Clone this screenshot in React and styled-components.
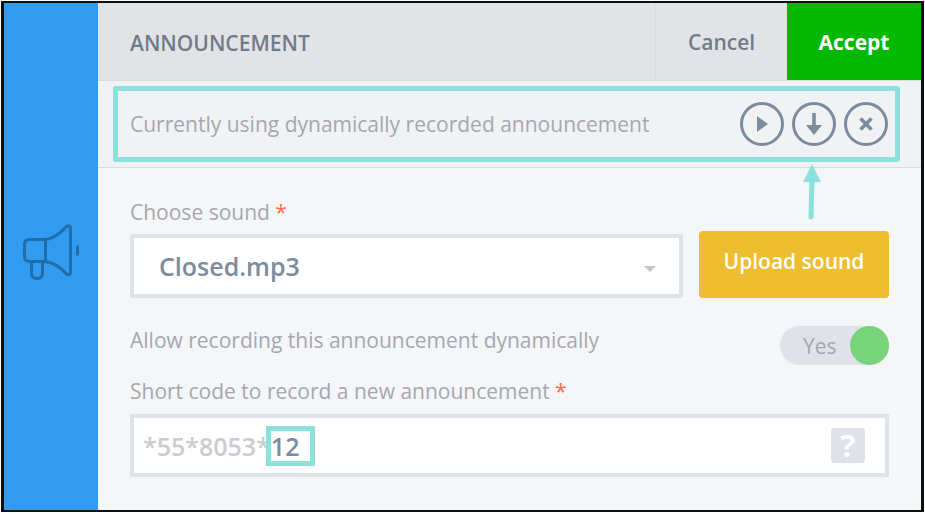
import React, { useState } from "react";
import styled, { createGlobalStyle } from "styled-components";

const aqua = "#8be1dc";
const slate = "#7b8c9e";
const line = "#dfe2e8";

const GlobalStyle = createGlobalStyle`
  *, *::before, *::after { box-sizing: border-box; }
  html, body, #root { height: 100%; }
  body { margin: 0; background: #fff; }
  body, button, input, select { font-family: "Open Sans", "Noto Sans", sans-serif; }
`;

const Page = styled.div`
  min-height: 100%;
  display: flex;
  padding: 1px 1px 2px;
`;

const Frame = styled.div`
  flex: 1;
  display: flex;
  border: 3px solid #0c0d0d;
  border-width: 2px 3px;
  background: #f5f6f8;
`;

const Sidebar = styled.aside`
  flex: 0 0 94px;
  display: flex;
  align-items: center;
  justify-content: center;
  padding-bottom: 10px;
  background: #319bf0;
`;

const Main = styled.main`
  flex: 1;
  min-width: 0;
`;

const Header = styled.header`
  display: flex;
  height: 78px;
  padding-left: 32px;
  background: #e2e3e7;
  border-bottom: 1px solid #d9dbde;
`;

const Title = styled.h1`
  flex: 1;
  margin: 0;
  align-self: center;
  font-size: 21px;
  line-height: 28px;
  font-weight: 600;
  color: #6f7c89;
  padding-top: 3px;
`;

const HeaderButton = styled.button`
  width: ${(p) => (p.$primary ? 134 : 132)}px;
  border: 0;
  border-left: ${(p) => (p.$primary ? "0" : "1px solid #d8dade")};
  padding: 0;
  background: ${(p) => (p.$primary ? "#02b800" : "transparent")};
  color: ${(p) => (p.$primary ? "#fff" : "#6f7c89")};
  font-size: 21px;
  line-height: 28px;
  font-weight: ${(p) => (p.$primary ? 700 : 600)};
`;

const Banner = styled.section`
  padding: 5px 21px 5px 15px;
  background: #f1f2f4;
  border-bottom: 1px solid #d9dbde;
`;

const BannerOutline = styled.div`
  display: flex;
  align-items: center;
  justify-content: space-between;
  height: 76px;
  padding: 0 7px 0 12px;
  border: 5px solid ${aqua};
  border-radius: 3px;
`;

const Text = styled.span`
  font-size: 21px;
  line-height: 28px;
  color: #a5a8af;
`;

const Label = styled.label`
  display: block;
  font-size: 21px;
  line-height: 28px;
  color: #a5a8af;
`;

const Required = styled.span`
  color: #ff6a4a;
`;

const Actions = styled.div`
  display: flex;
  gap: 8px;
`;

const ActionSlot = styled.div`
  position: relative;
  display: flex;
`;

const RoundButton = styled.button`
  width: 44px;
  height: 44px;
  display: grid;
  place-items: center;
  padding: 0;
  border: 3px solid ${slate};
  border-radius: 50%;
  background: transparent;
  color: ${slate};
`;

const Pointer = styled.svg`
  position: absolute;
  top: 62px;
  left: 10px;
  pointer-events: none;
`;

const Form = styled.form`
  padding: 30px 32px 32px;
`;

const SoundRow = styled.div`
  display: flex;
  align-items: flex-end;
  gap: 16px;
  margin-top: 5px;
`;

const SelectBox = styled.div`
  flex: 1;
  display: grid;
  align-items: center;
`;

const Select = styled.select`
  grid-area: 1 / 1;
  width: 100%;
  height: 64px;
  appearance: none;
  padding: 0 60px 0 25px;
  border: 4px solid ${line};
  border-radius: 2px;
  background: #fff;
  color: ${slate};
  font-size: 25px;
  font-weight: 600;
`;

const Caret = styled.svg`
  grid-area: 1 / 1;
  justify-self: end;
  margin: 6px 27px 0 0;
  pointer-events: none;
`;

const UploadButton = styled.button`
  width: 190px;
  height: 67px;
  padding: 0 0 8px;
  border: 0;
  border-radius: 4px;
  background: #efbd30;
  color: #fff;
  font-size: 21px;
  line-height: 28px;
  font-weight: 600;
`;

const ToggleRow = styled.div`
  display: flex;
  justify-content: space-between;
  align-items: flex-start;
  margin-top: 28px;
`;

const Toggle = styled.label`
  position: relative;
  display: flex;
  align-items: center;
  justify-content: space-between;
  width: 109px;
  height: 39px;
  padding-left: 23px;
  border-radius: 20px;
  background: ${line};
`;

const ToggleInput = styled.input`
  position: absolute;
  inset: 0;
  margin: 0;
  width: 100%;
  height: 100%;
  opacity: 0;
`;

const Knob = styled.span`
  width: 39px;
  height: 39px;
  border-radius: 50%;
  background: ${(p) => (p.$on ? "#77d47a" : "#b8bdc5")};
`;

const CodeField = styled.div`
  display: flex;
  align-items: center;
  gap: 1px;
  height: 63px;
  margin-top: 9px;
  padding: 0 20px 0 9px;
  border: 4px solid ${line};
  background: #fff;
  font-size: 25px;
  line-height: 34px;
  font-weight: 600;
`;

const CodeLabel = styled(Label)`
  margin-top: 12px;
`;

const Prefix = styled.span`
  color: #c9ccd1;
`;

const CodeSlot = styled.div`
  position: relative;
  display: flex;
  flex: 1;

  &::after {
    content: "";
    position: absolute;
    top: -2px;
    left: -5px;
    width: 49px;
    height: 40px;
    border: 5px solid ${aqua};
    pointer-events: none;
  }
`;

const CodeInput = styled.input`
  width: 100%;
  height: 36px;
  padding: 0;
  border: 0;
  outline: 0;
  background: transparent;
  color: ${slate};
  font-size: 25px;
  font-weight: 600;
`;

const HelpButton = styled.button`
  width: 34px;
  height: 35px;
  padding: 0;
  border: 0;
  border-radius: 4px;
  background: ${line};
  color: #fff;
  font-size: 31px;
  line-height: 35px;
  font-weight: 700;
`;

function Megaphone() {
  return (
    <svg width="58" height="58" viewBox="0 0 58 58" fill="none" stroke="#216da9" strokeWidth="3" strokeLinecap="round" strokeLinejoin="round" aria-hidden="true">
      <path d="M23.500 16.500H7.500Q2.500 16.500 2.500 21.500V33.500Q2.500 38.500 7.500 38.500H23.500Z" />
      <path d="M23.500 16.500C32 15.500 39 9.500 44 4C46 2 48.500 2.500 48.500 5.500V49C48.500 52 46 52.500 44 50.500C39 45 32 39.500 23.500 38.500" />
      <path d="M9.500 39V50Q9.500 55.500 15 55.500Q20.500 55.500 20.500 50V39" />
      <path d="M55.500 22.500V32.500" strokeLinecap="butt" />
    </svg>
  );
}

export default function App() {
  const [dynamic, setDynamic] = useState(true);
  const [code, setCode] = useState("12");

  return (
    <>
      <GlobalStyle />
      <Page>
        <Frame>
          <Sidebar>
            <Megaphone />
          </Sidebar>
          <Main>
            <Header>
              <Title>ANNOUNCEMENT</Title>
              <HeaderButton type="button">Cancel</HeaderButton>
              <HeaderButton type="submit" form="announcement" $primary>Accept</HeaderButton>
            </Header>
            <Banner>
              <BannerOutline>
                <Text>Currently using dynamically recorded announcement</Text>
                <Actions>
                  <RoundButton type="button" aria-label="Play">
                    <svg width="24" height="24" viewBox="0 0 24 24" fill="currentColor" aria-hidden="true">
                      <path d="M7 4L18 12L7 20Z" />
                    </svg>
                  </RoundButton>
                  <ActionSlot>
                    <RoundButton type="button" aria-label="Download">
                      <svg width="24" height="24" viewBox="0 0 24 24" fill="currentColor" aria-hidden="true">
                        <path d="M10.200 1H13.800V13H20L12 23L4 13H10.200Z" />
                      </svg>
                    </RoundButton>
                    <Pointer width="20" height="58" viewBox="0 0 20 58" aria-hidden="true">
                      <path d="M10 15L9 53" stroke={aqua} strokeWidth="5" strokeLinecap="round" />
                      <path d="M10 0L19 18H1Z" fill={aqua} />
                    </Pointer>
                  </ActionSlot>
                  <RoundButton type="button" aria-label="Remove">
                    <svg width="24" height="24" viewBox="0 0 24 24" fill="none" stroke="currentColor" strokeWidth="3.6" aria-hidden="true">
                      <path d="M6.500 6.500L17.500 17.500M17.500 6.500L6.500 17.500" />
                    </svg>
                  </RoundButton>
                </Actions>
              </BannerOutline>
            </Banner>
            <Form id="announcement" onSubmit={(e) => e.preventDefault()}>
              <Label htmlFor="sound">Choose sound <Required>*</Required></Label>
              <SoundRow>
                <SelectBox>
                  <Select id="sound" defaultValue="Closed.mp3">
                    <option>Closed.mp3</option>
                  </Select>
                  <Caret width="12" height="7" viewBox="0 0 12 7" aria-hidden="true">
                    <path d="M0 0H12L6 6Z" fill="#bcc6cf" />
                  </Caret>
                </SelectBox>
                <UploadButton type="button">Upload sound</UploadButton>
              </SoundRow>
              <ToggleRow>
                <Label htmlFor="dynamic">Allow recording this announcement dynamically</Label>
                <Toggle>
                  <Text>{dynamic ? "Yes" : "No"}</Text>
                  <Knob $on={dynamic} />
                  <ToggleInput id="dynamic" type="checkbox" role="switch" checked={dynamic} onChange={(e) => setDynamic(e.target.checked)} />
                </Toggle>
              </ToggleRow>
              <CodeLabel htmlFor="code">Short code to record a new announcement <Required>*</Required></CodeLabel>
              <CodeField>
                <Prefix>*55*8053*</Prefix>
                <CodeSlot>
                  <CodeInput id="code" value={code} onChange={(e) => setCode(e.target.value)} />
                </CodeSlot>
                <HelpButton type="button" aria-label="Help">?</HelpButton>
              </CodeField>
            </Form>
          </Main>
        </Frame>
      </Page>
    </>
  );
}
